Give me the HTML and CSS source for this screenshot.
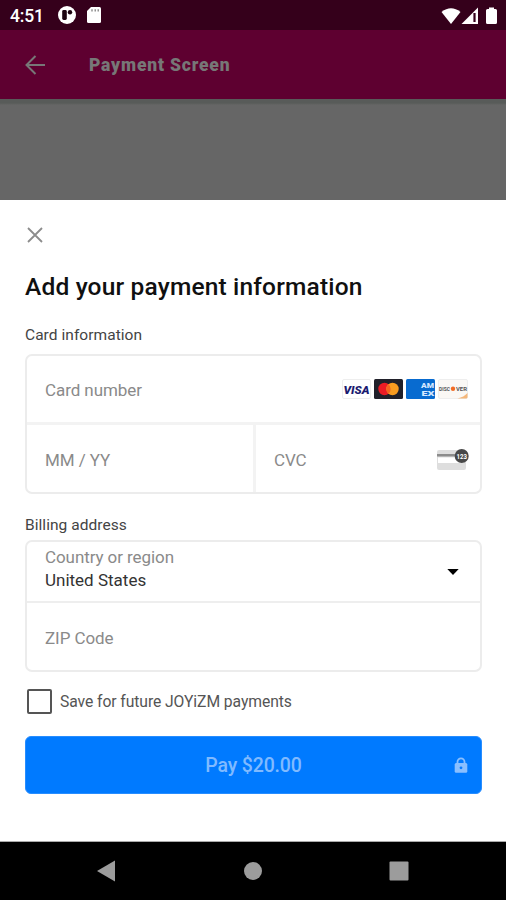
FILE: index.html
```html
<!DOCTYPE html>
<html lang="en">
<head>
<meta charset="utf-8">
<title>Payment Screen</title>
<link rel="stylesheet" href="styles.css">
</head>
<body>
<div class="status">
  <span class="time">4:51</span>
  <svg class="notif" width="46" height="20" viewBox="0 0 46 20">
    <circle cx="9" cy="10" r="9" fill="#fff"/>
    <rect x="4.2" y="5" width="4.6" height="10" rx="1.4" fill="#1c0410"/>
    <circle cx="12" cy="7.3" r="2.2" fill="#1c0410"/>
    <path d="M33 2h8.500a1.500 1.500 0 0 1 1.500 1.500v13a1.500 1.500 0 0 1-1.500 1.500h-11a1.500 1.500 0 0 1-1.500-1.500V6z" fill="#fff"/>
    <path d="M34 4.200v2.300M37.200 4.200v2.300M40.200 4.200v2.300" stroke="#777" stroke-width="1.200"/>
  </svg>
  <svg class="signals" width="58" height="18" viewBox="0 0 58 18">
    <path d="M.5 5Q10-2.500 19.500 5L10 17z" fill="#fff"/>
    <path d="M37 .5V17H20.500z" fill="#fff"/>
    <path d="M33.500 6v9" stroke="#35001b" stroke-width="2.200"/>
    <path d="M48 2V.5h5V2h1.500a1.500 1.500 0 0 1 1.500 1.500v12a1.500 1.500 0 0 1-1.500 1.500h-8a1.500 1.500 0 0 1-1.500-1.500v-12A1.500 1.500 0 0 1 46.500 2z" fill="#fff"/>
  </svg>
</div>
<header class="appbar">
  <svg width="20" height="20" viewBox="0 0 20 20" fill="none" stroke="#777" stroke-width="2"><path d="M20 10H2M10.500 1L1.500 10l9 9"/></svg>
  <span class="title">Payment Screen</span>
</header>
<div class="backdrop"></div>
<main class="sheet">
  <svg class="close" width="16" height="16" viewBox="0 0 16 16" fill="none" stroke="#8c8c8c" stroke-width="1.800"><path d="M1 1l14 14M15 1L1 15"/></svg>
  <h1 class="heading">Add your payment information</h1>
  <div class="label card-label">Card information</div>
  <section class="box card-box">
    <div class="field number">
      <span class="hint card-hint">Card number</span>
      <span class="brands">
        <svg width="29" height="20" viewBox="0 0 29 20"><rect x=".5" y=".5" width="28" height="19" rx="1.500" fill="#fff" stroke="#eee"/><text class="visa" x="1.500" y="14.500" textLength="26" lengthAdjust="spacingAndGlyphs">VISA</text></svg>
        <svg width="29" height="20" viewBox="0 0 29 20"><rect width="29" height="20" rx="1.500" fill="#20202a"/><circle cx="10.500" cy="10" r="6.200" fill="#eb1b25"/><circle cx="18.500" cy="10" r="6.200" fill="#f99c20"/><path d="M14.500 5.300a6.200 6.200 0 0 1 0 9.400 6.200 6.200 0 0 1 0-9.400z" fill="#f46320"/></svg>
        <svg width="29" height="20" viewBox="0 0 29 20"><rect width="29" height="20" rx="1.500" fill="#086bd0"/><text class="amex" x="15" y="8.700" textLength="13" lengthAdjust="spacingAndGlyphs">AM</text><text class="amex" x="15.500" y="16.900" textLength="13" lengthAdjust="spacingAndGlyphs">EX</text></svg>
        <svg width="30" height="20" viewBox="0 0 30 20"><rect x=".5" y=".5" width="29" height="19" rx="1.500" fill="#faf8f5" stroke="#eee"/><path d="M19.500 19.500Q26 18 29.500 14v4a1.500 1.500 0 0 1-1.500 1.500z" fill="#f4b77b"/><text class="disc" x="1" y="11.500" textLength="11" lengthAdjust="spacingAndGlyphs">DISC</text><circle cx="15" cy="9.700" r="2.200" fill="#f26b23"/><text class="disc" x="18" y="11.500" textLength="11" lengthAdjust="spacingAndGlyphs">VER</text></svg>
      </span>
    </div>
    <div class="split">
      <div class="field expiry"><span class="hint mm">MM / YY</span></div>
      <div class="field cvc">
        <span class="hint cvc-hint">CVC</span>
        <svg width="33" height="22" viewBox="0 0 33 22"><rect x="1" y="1" width="29" height="20" rx="2" fill="#dedede"/><rect x="1" y="5" width="29" height="2.500" fill="#8c8c8c"/><rect x="2" y="8.500" width="26" height="5.500" fill="#fff"/><circle cx="25.700" cy="7" r="7" fill="#484848"/><text class="digits" x="20.500" y="9.800" textLength="10.500" lengthAdjust="spacingAndGlyphs">123</text></svg>
      </div>
    </div>
  </section>
  <div class="label bill-label">Billing address</div>
  <section class="box bill-box">
    <div class="field country">
      <div class="stack"><span class="hint country-hint">Country or region</span><span class="value">United States</span></div>
      <svg width="12" height="6" viewBox="0 0 12 6"><path d="M.3 0h11.400L6 6z" fill="#000"/></svg>
    </div>
    <div class="field zip"><span class="hint zip-hint">ZIP Code</span></div>
  </section>
  <div class="save"><span class="check"></span><span class="save-text">Save for future JOYiZM payments</span></div>
  <div class="pay">
    <span class="pay-text">Pay $20.00</span>
    <svg class="lock" width="14" height="16" viewBox="0 0 14 16"><path d="M3.500 7V4.800a3.500 3.500 0 0 1 7 0V7" fill="none" stroke="#8abfff" stroke-width="1.800"/><rect x=".7" y="6" width="12.600" height="9.700" rx="1.500" fill="#8abfff"/><circle cx="7" cy="10.800" r="1.400" fill="#087cff"/></svg>
  </div>
</main>
<nav class="nav">
  <svg width="18" height="22" viewBox="0 0 18 22"><path d="M0 11L18 .5v21z" fill="#9c9c9c"/></svg>
  <svg width="18" height="18" viewBox="0 0 18 18"><circle cx="9" cy="9" r="9" fill="#9c9c9c"/></svg>
  <svg width="20" height="20" viewBox="0 0 20 20"><rect x=".5" y=".5" width="19" height="19" rx="1" fill="#9c9c9c"/></svg>
</nav>
</body>
</html>
```
FILE: styles.css
```css
* { box-sizing: border-box; }
body { margin: 0; width: 506px; height: 900px; overflow: hidden; font-family: Roboto, "Liberation Sans", sans-serif; background: #fff; }
svg { display: block; flex: none; }
span { white-space: nowrap; }
.status { height: 30px; background: #35001b; display: flex; align-items: center; padding: 2px 7px 0 10px; }
.time { width: 48px; color: #fff; font-size: 17.5px; font-weight: 500; line-height: 20px; letter-spacing: -.2px; }
.notif { margin-top: -2px; }
.signals { margin-left: auto; margin-top: -1px; }
.appbar { height: 69px; background: #5e0030; display: flex; align-items: center; padding-left: 25px; }
.title { margin-left: 44px; color: #777; font-size: 17.5px; font-weight: 900; letter-spacing: .82px; }
.backdrop { height: 101px; background: linear-gradient(#585b59 0, #585b59 4px, #666 6px, #666 100%); }
.sheet { height: 642px; padding: 27px 24px 0 25px; display: flex; flex-direction: column; background: #fff; border-bottom: 1px solid #aaa; }
.close { margin-left: 2px; }
.heading { margin: 28px 0 0; font-size: 24.5px; line-height: 32px; font-weight: 500; color: #101010; white-space: nowrap; letter-spacing: .17px; }
.label { font-size: 15.5px; line-height: 20px; color: #444; white-space: nowrap; letter-spacing: .05px; }
.card-label { margin-top: 22px; }
.box { border: 2px solid #ececec; border-radius: 7px; }
.card-box { margin-top: 9px; height: 140px; flex: none; }
.field { display: flex; align-items: center; padding-left: 18px; }
.number { height: 69px; justify-content: space-between; padding-right: 12px; border-bottom: 3px solid #f3f3f3; }
.hint { font-size: 17px; line-height: 22px; color: #8a8a8a; letter-spacing: -.08px; }
.card-hint { margin-top: 2px; }
.brands { display: flex; gap: 3px; }
.visa { font: italic 900 11px Roboto, sans-serif; fill: #1a1a70; }
.amex { font: 900 7px Roboto, sans-serif; fill: #d5e8ff; }
.disc { font: 700 5px Roboto, sans-serif; fill: #555; }
.digits { font: 700 8px Roboto, sans-serif; fill: #fff; }
.split { display: flex; height: 67px; }
.expiry { width: 229px; padding-top: 3px; border-right: 3px solid #f3f3f3; }
.cvc { flex: 1; justify-content: space-between; padding-right: 11px; padding-left: 18px; padding-top: 2px; }
.bill-label { margin-top: 21px; }
.bill-box { margin-top: 5px; height: 132px; flex: none; }
.country { height: 61px; justify-content: space-between; padding-right: 21px; border-bottom: 2px solid #eee; }
.stack { display: flex; flex-direction: column; margin-top: -3px; }
.country-hint { line-height: 21px; }
.value { font-size: 17px; line-height: 25px; color: #333; }
.zip { height: 67px; padding-top: 2px; }
.save { display: flex; align-items: center; height: 26px; margin-top: 16px; padding-left: 2px; }
.check { width: 25px; height: 25px; border: 2px solid #555; border-radius: 2px; }
.save-text { margin-left: 8px; font-size: 15.7px; color: #555; letter-spacing: -.08px; }
.pay { margin-top: 22px; height: 58px; flex: none; border-radius: 6px; background: #007aff; border: 1px solid #278dff; display: grid; grid-template-columns: 1fr auto 1fr; align-items: center; }
.pay-text { grid-column: 2; font-size: 19.5px; font-weight: 500; color: #80baff; letter-spacing: -.15px; }
.lock { justify-self: end; margin-right: 13px; }
.nav { height: 58px; background: #000; display: grid; grid-template-columns: 18px 18px 20px; align-items: center; column-gap: 129px; padding-left: 97px; }
.nav svg:last-child { margin-left: -2px; }
```
